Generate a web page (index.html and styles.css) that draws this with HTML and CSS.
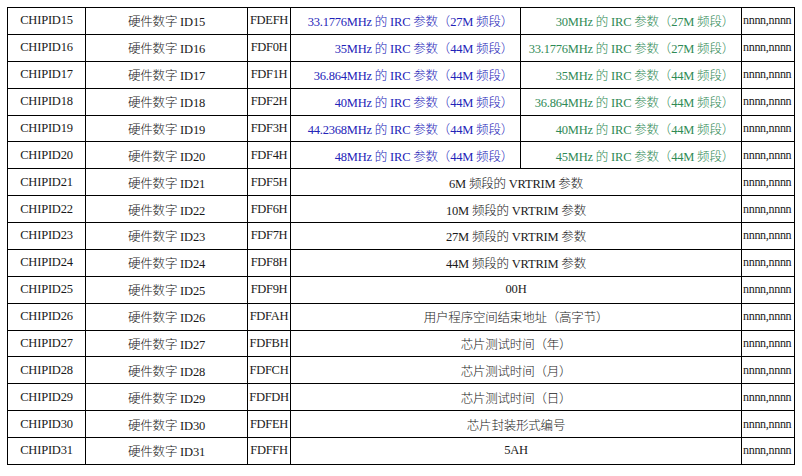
FILE: index.html
```html
<!DOCTYPE html>
<html lang="zh-CN">
<head>
<meta charset="utf-8">
<title>CHIPID</title>
<link rel="stylesheet" href="styles.css">
</head>
<body>
<table class="grid">
  <colgroup>
    <col class="c1"><col class="c2"><col class="c3"><col class="c4"><col class="c5"><col class="c6">
  </colgroup>
  <tbody>
    <tr><td>CHIPID15</td><td>硬件数字 ID15</td><td class="addr">FDEFH</td><td class="blue">33.1776MHz 的 IRC 参数（27M 频段）</td><td class="green">30MHz 的 IRC 参数（27M 频段）</td><td class="val">nnnn,nnnn</td></tr>
    <tr><td>CHIPID16</td><td>硬件数字 ID16</td><td class="addr">FDF0H</td><td class="blue">35MHz 的 IRC 参数（44M 频段）</td><td class="green">33.1776MHz 的 IRC 参数（27M 频段）</td><td class="val">nnnn,nnnn</td></tr>
    <tr><td>CHIPID17</td><td>硬件数字 ID17</td><td class="addr">FDF1H</td><td class="blue">36.864MHz 的 IRC 参数（44M 频段）</td><td class="green">35MHz 的 IRC 参数（44M 频段）</td><td class="val">nnnn,nnnn</td></tr>
    <tr><td>CHIPID18</td><td>硬件数字 ID18</td><td class="addr">FDF2H</td><td class="blue">40MHz 的 IRC 参数（44M 频段）</td><td class="green">36.864MHz 的 IRC 参数（44M 频段）</td><td class="val">nnnn,nnnn</td></tr>
    <tr><td>CHIPID19</td><td>硬件数字 ID19</td><td class="addr">FDF3H</td><td class="blue">44.2368MHz 的 IRC 参数（44M 频段）</td><td class="green">40MHz 的 IRC 参数（44M 频段）</td><td class="val">nnnn,nnnn</td></tr>
    <tr><td>CHIPID20</td><td>硬件数字 ID20</td><td class="addr">FDF4H</td><td class="blue">48MHz 的 IRC 参数（44M 频段）</td><td class="green">45MHz 的 IRC 参数（44M 频段）</td><td class="val">nnnn,nnnn</td></tr>
    <tr><td>CHIPID21</td><td>硬件数字 ID21</td><td class="addr">FDF5H</td><td colspan="2">6M 频段的 VRTRIM 参数</td><td class="val">nnnn,nnnn</td></tr>
    <tr><td>CHIPID22</td><td>硬件数字 ID22</td><td class="addr">FDF6H</td><td colspan="2">10M 频段的 VRTRIM 参数</td><td class="val">nnnn,nnnn</td></tr>
    <tr><td>CHIPID23</td><td>硬件数字 ID23</td><td class="addr">FDF7H</td><td colspan="2">27M 频段的 VRTRIM 参数</td><td class="val">nnnn,nnnn</td></tr>
    <tr><td>CHIPID24</td><td>硬件数字 ID24</td><td class="addr">FDF8H</td><td colspan="2">44M 频段的 VRTRIM 参数</td><td class="val">nnnn,nnnn</td></tr>
    <tr><td>CHIPID25</td><td>硬件数字 ID25</td><td class="addr">FDF9H</td><td colspan="2">00H</td><td class="val">nnnn,nnnn</td></tr>
    <tr><td>CHIPID26</td><td>硬件数字 ID26</td><td class="addr">FDFAH</td><td colspan="2">用户程序空间结束地址（高字节）</td><td class="val">nnnn,nnnn</td></tr>
    <tr><td>CHIPID27</td><td>硬件数字 ID27</td><td class="addr">FDFBH</td><td colspan="2">芯片测试时间（年）</td><td class="val">nnnn,nnnn</td></tr>
    <tr><td>CHIPID28</td><td>硬件数字 ID28</td><td class="addr">FDFCH</td><td colspan="2">芯片测试时间（月）</td><td class="val">nnnn,nnnn</td></tr>
    <tr><td>CHIPID29</td><td>硬件数字 ID29</td><td class="addr">FDFDH</td><td colspan="2">芯片测试时间（日）</td><td class="val">nnnn,nnnn</td></tr>
    <tr><td>CHIPID30</td><td>硬件数字 ID30</td><td class="addr">FDFEH</td><td colspan="2">芯片封装形式编号</td><td class="val">nnnn,nnnn</td></tr>
    <tr><td>CHIPID31</td><td>硬件数字 ID31</td><td class="addr">FDFFH</td><td colspan="2">5AH</td><td class="val">nnnn,nnnn</td></tr>
  </tbody>
</table>
</body>
</html>
```

FILE: styles.css
```css
html, body {
  margin: 0;
  padding: 0;
  background: #ffffff;
}

body {
  padding: 7px 0 0 7px;
  font-family: "Liberation Serif", "Noto Sans CJK SC", serif;
  font-size: 12.5px;
  font-weight: 300;
  color: #1a1a1a;
}

.grid {
  border-collapse: collapse;
  table-layout: fixed;
  width: 787px;
}

.c1 { width: 78px; }
.c2 { width: 162px; }
.c3 { width: 43px; }
.c4 { width: 230px; }
.c5 { width: 221px; }
.c6 { width: 53px; }

.grid td {
  border: 1px solid #000;
  height: 25.88px;
  padding: 0;
  text-align: center;
  vertical-align: middle;
  white-space: nowrap;
  overflow: hidden;
  letter-spacing: -0.2px;
}

.grid td.addr {
  text-align: center;
  letter-spacing: -0.3px;
}

.grid td.blue {
  color: #2323b8;
  text-align: right;
  padding-right: 7px;
}

.grid td.green {
  color: #2f8a55;
  text-align: right;
  padding-right: 7px;
}

.grid td.val {
  text-align: left;
  font-size: 12px;
  letter-spacing: -0.3px;
  padding-left: 1px;
}
```
